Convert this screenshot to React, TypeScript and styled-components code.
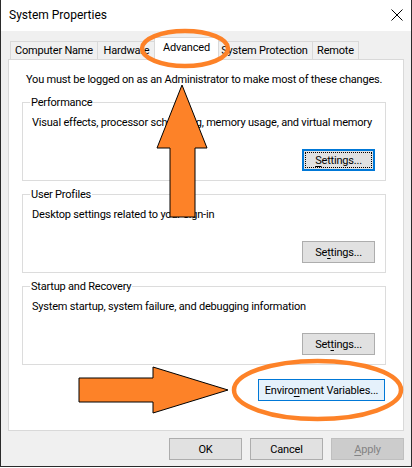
import styled, { createGlobalStyle } from 'styled-components';

const GlobalStyle = createGlobalStyle`
  html, body {
    margin: 0;
    padding: 0;
    background: #ffffff;
  }
  * {
    box-sizing: border-box;
  }
`;

const tabs = [
  { label: 'Computer Name', width: 88 },
  { label: 'Hardware', width: 59 },
  { label: 'Advanced', width: 65, active: true },
  { label: 'System Protection', width: 97 },
  { label: 'Remote', width: 47 },
];

export default function App() {
  return (
    <>
      <GlobalStyle />
      <Window>
        <TitleBar>
          <Title>System Properties</Title>
          <CloseButton>
            <svg width="12" height="12" viewBox="0 0 12 12">
              <path d="M0.5 0.5 L11.5 11.5 M11.5 0.5 L0.5 11.5" stroke="#000" strokeWidth="1" fill="none" />
            </svg>
          </CloseButton>
        </TitleBar>

        <Body>
          <TabStrip>
            {tabs.map((t) => (
              <Tab key={t.label} $width={t.width} $active={!!t.active}>
                {t.label}
              </Tab>
            ))}
          </TabStrip>

          <Panel>
            <Notice>You must be logged on as an Administrator to make most of these changes.</Notice>

            <Group>
              <Legend>Performance</Legend>
              <GroupText>Visual effects, processor scheduling, memory usage, and virtual memory</GroupText>
              <ButtonRow>
                <Button $variant="focused">
                  <u>S</u>ettings...
                </Button>
              </ButtonRow>
            </Group>

            <Group>
              <Legend>User Profiles</Legend>
              <GroupText>Desktop settings related to your sign-in</GroupText>
              <ButtonRow>
                <Button>
                  Se<u>t</u>tings...
                </Button>
              </ButtonRow>
            </Group>

            <Group>
              <Legend>Startup and Recovery</Legend>
              <GroupText>System startup, system failure, and debugging information</GroupText>
              <ButtonRow>
                <Button>
                  Set<u>t</u>ings...
                </Button>
              </ButtonRow>
            </Group>

            <EnvRow>
              <Button $variant="hover" $width={127}>
                Enviro<u>n</u>ment Variables...
              </Button>
            </EnvRow>
          </Panel>

          <DialogButtons>
            <Button>OK</Button>
            <Button>Cancel</Button>
            <Button $variant="disabled">
              <u>A</u>pply
            </Button>
          </DialogButtons>
        </Body>

        <Annotations width="412" height="468" viewBox="0 0 412 468">
          <ellipse cx="185" cy="48.5" rx="43" ry="17.5" fill="none" stroke="#fd8228" strokeWidth="4.5" />
          <ellipse cx="317.5" cy="390" rx="83.5" ry="29" fill="none" stroke="#fd8228" strokeWidth="4.5" />
          <polygon
            points="182,85 207,148 195,148 195,217 170,217 170,148 157,148"
            fill="#fd8228"
            stroke="#000"
            strokeWidth="1"
          />
          <polygon
            points="79,378 153,378 153,367 228,390 153,413 153,402 79,402"
            fill="#fd8228"
            stroke="#000"
            strokeWidth="1"
          />
        </Annotations>
      </Window>
    </>
  );
}

const Window = styled.div`
  position: relative;
  width: 412px;
  height: 467px;
  display: flex;
  flex-direction: column;
  background: #f0f0f0;
  border: 1px solid #2b2b2b;
  border-top: none;
  font-family: Roboto, 'Liberation Sans', sans-serif;
  font-size: 11px;
  letter-spacing: -0.2px;
  color: #000;
`;

const TitleBar = styled.div`
  height: 31px;
  flex-shrink: 0;
  background: #ffffff;
  display: flex;
  align-items: center;
  justify-content: space-between;
  padding: 0 4px 1px 8px;
`;

const Title = styled.span`
  font-size: 12px;
  letter-spacing: 0;
  color: #000;
`;

const CloseButton = styled.span`
  display: flex;
  align-items: center;
  justify-content: center;
  width: 20px;
  height: 20px;
`;

const Body = styled.div`
  flex: 1;
  display: flex;
  flex-direction: column;
  padding: 6px 7px 0 7px;
`;

const TabStrip = styled.div`
  display: flex;
  align-items: flex-end;
  padding-left: 2px;
  height: 22px;
`;

const Tab = styled.div<{ $width: number; $active: boolean }>`
  position: relative;
  width: ${(p) => p.$width}px;
  height: ${(p) => (p.$active ? 23 : 18)}px;
  margin-left: ${(p) => (p.$active ? -2 : -1)}px;
  margin-right: ${(p) => (p.$active ? -2 : 0)}px;
  margin-bottom: ${(p) => (p.$active ? -1 : 0)}px;
  z-index: ${(p) => (p.$active ? 2 : 1)};
  border: 1px solid #d9d9d9;
  border-bottom: none;
  background: ${(p) => (p.$active ? '#ffffff' : '#f0f0f0')};
  display: flex;
  align-items: center;
  justify-content: center;
  padding-bottom: ${(p) => (p.$active ? 4 : 0)}px;
  white-space: nowrap;

  &:first-child {
    margin-left: 0;
  }
`;

const Panel = styled.div`
  height: 372px;
  display: flex;
  flex-direction: column;
  gap: 6px;
  background: #ffffff;
  border: 1px solid #d9d9d9;
  padding: 12px 17px 0 13px;
`;

const Notice = styled.div`
  line-height: 15px;
  padding-left: 4px;
  margin-bottom: 2px;
  white-space: nowrap;
`;

const Group = styled.fieldset`
  margin: 0;
  min-width: 0;
  border: 1px solid #dcdcdc;
  padding: 0 10px 9px 9px;
  display: flex;
  flex-direction: column;
`;

const Legend = styled.legend`
  line-height: 15px;
  padding: 0 1px;
  margin-left: -2px;
`;

const GroupText = styled.div`
  line-height: 15px;
  margin-top: 5px;
  white-space: nowrap;
`;

const ButtonRow = styled.div`
  display: flex;
  justify-content: flex-end;
  margin-top: 19px;
`;

const EnvRow = styled.div`
  display: flex;
  justify-content: flex-end;
  margin-top: 8px;
  padding-right: 1px;
`;

const DialogButtons = styled.div`
  display: flex;
  justify-content: flex-end;
  gap: 8px;
  margin-top: 7px;
`;

type Variant = 'normal' | 'focused' | 'hover' | 'disabled';

const variantStyles: Record<Variant, string> = {
  normal: 'background: #e1e1e1; border: 1px solid #adadad; color: #000;',
  focused:
    'background: #e1e1e1; border: 2px solid #0078d7; color: #000; outline: 1px dotted #000; outline-offset: -4px;',
  hover: 'background: #e5f1fb; border: 1px solid #0078d7; color: #000;',
  disabled: 'background: #cccccc; border: 1px solid #bfbfbf; color: #838383;',
};

const Button = styled.div<{ $variant?: Variant; $width?: number }>`
  width: ${(p) => p.$width ?? 73}px;
  height: 22px;
  display: flex;
  align-items: center;
  justify-content: center;
  white-space: nowrap;
  ${(p) => variantStyles[p.$variant ?? 'normal']}

  u {
    text-decoration: underline;
    text-underline-offset: 2px;
  }
`;

const Annotations = styled.svg`
  position: absolute;
  left: -1px;
  top: 0;
  pointer-events: none;
  z-index: 10;
`;
